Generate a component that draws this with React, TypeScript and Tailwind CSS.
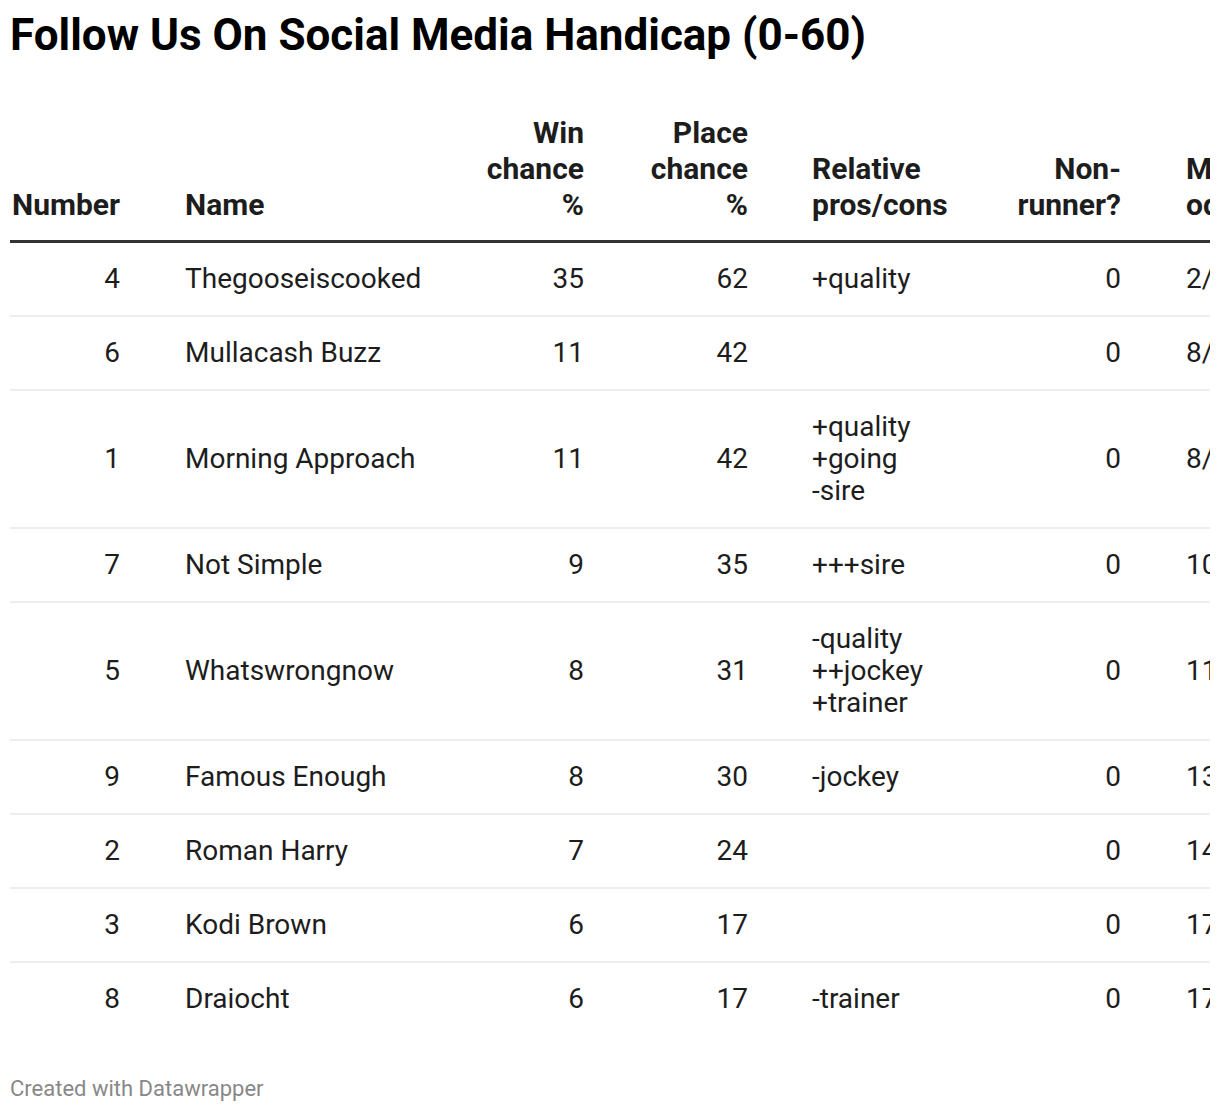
import React from "react";

type Row = { num: string; name: string; win: string; place: string; rel: string[]; nr: string; odds: string };

const rows: Row[] = [
  { num: "4", name: "Thegooseiscooked", win: "35", place: "62", rel: ["+quality"], nr: "0", odds: "2/1" },
  { num: "6", name: "Mullacash Buzz", win: "11", place: "42", rel: [], nr: "0", odds: "8/1" },
  { num: "1", name: "Morning Approach", win: "11", place: "42", rel: ["+quality", "+going", "-sire"], nr: "0", odds: "8/1" },
  { num: "7", name: "Not Simple", win: "9", place: "35", rel: ["+++sire"], nr: "0", odds: "10/1" },
  { num: "5", name: "Whatswrongnow", win: "8", place: "31", rel: ["-quality", "++jockey", "+trainer"], nr: "0", odds: "11/1" },
  { num: "9", name: "Famous Enough", win: "8", place: "30", rel: ["-jockey"], nr: "0", odds: "13/1" },
  { num: "2", name: "Roman Harry", win: "7", place: "24", rel: [], nr: "0", odds: "14/1" },
  { num: "3", name: "Kodi Brown", win: "6", place: "17", rel: [], nr: "0", odds: "17/1" },
  { num: "8", name: "Draiocht", win: "6", place: "17", rel: ["-trainer"], nr: "0", odds: "17/1" },
];

export default function App() {
  return (
    <div className="bg-white w-[1220px] h-[1112px] px-[10px] text-[#1d1d1d]" style={{ fontFamily: "Roboto, 'Liberation Sans', sans-serif" }}>
      <h1 className="text-[44px] leading-[48px] font-bold text-black pt-[11px]">Follow Us On Social Media Handicap (0-60)</h1>
      <div className="w-[1200px] overflow-hidden mt-[56px]">
        <table className="table-fixed border-collapse w-[1261px]">
          <colgroup>
            <col className="w-[110px]" />
            <col className="w-[344px]" />
            <col className="w-[120px]" />
            <col className="w-[164px]" />
            <col className="w-[252px]" />
            <col className="w-[121px]" />
            <col className="w-[150px]" />
          </colgroup>
          <thead>
            <tr className="border-b-[3px] border-[#333333] text-[30px] leading-[36px] font-bold text-[#1d1d1d] align-bottom">
              <th className="text-right font-bold pt-[16px] pb-[17px]">Number</th>
              <th className="text-left font-bold pl-[65px] pb-[17px]">Name</th>
              <th className="text-right font-bold pb-[17px]">Win<br />chance<br />%</th>
              <th className="text-right font-bold pb-[17px]">Place<br />chance<br />%</th>
              <th className="text-left font-bold pl-[64px] pb-[17px]">Relative<br />pros/cons</th>
              <th className="text-right font-bold pb-[17px]">Non-<br />runner?</th>
              <th className="text-left font-bold pl-[65px] pb-[17px] whitespace-nowrap">Market<br />odds</th>
            </tr>
          </thead>
          <tbody className="text-[28px] leading-[32px]">
            {rows.map((r, i) => (
              <tr key={i} className={i < rows.length - 1 ? "border-b-2 border-[#eeeeee]" : ""}>
                <td className="text-right py-[20px]">{r.num}</td>
                <td className="text-left pl-[65px] py-[20px]">{r.name}</td>
                <td className="text-right py-[20px]">{r.win}</td>
                <td className="text-right py-[20px]">{r.place}</td>
                <td className="text-left pl-[64px] py-[20px]">
                  {r.rel.map((t, j) => (
                    <div key={j}>{t}</div>
                  ))}
                </td>
                <td className="text-right py-[20px]">{r.nr}</td>
                <td className="text-left pl-[65px] py-[20px] whitespace-nowrap">{r.odds}</td>
              </tr>
            ))}
          </tbody>
        </table>
      </div>
      <div className="mt-[40px] text-[22px] leading-[28px] text-[#888888]">Created with Datawrapper</div>
    </div>
  );
}
